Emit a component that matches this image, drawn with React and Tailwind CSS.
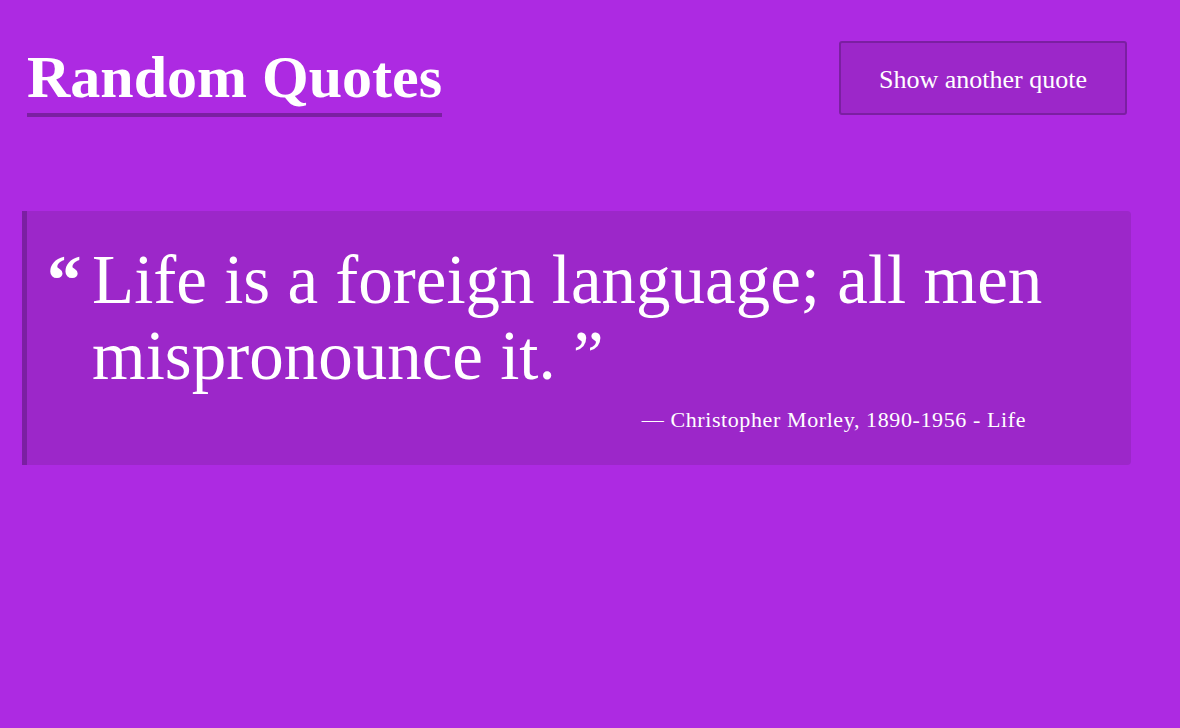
import React from "react";

function App() {
  return (
    <div
      className="min-h-screen bg-[#ad2ae2] text-white"
      style={{ fontFamily: '"Liberation Serif", "DejaVu Serif", serif' }}
    >
      {/* Header */}
      <header className="flex items-start justify-between pl-[27px] pr-[53px] pt-[41px]">
        <h1 className="mt-[8px] border-b-4 border-[#7b1fa2] pb-[8px] text-[60px] font-bold leading-[56px]">
          Random Quotes
        </h1>
        <button className="h-[74px] w-[288px] rounded-[3px] border-2 border-[#7b1fa2] bg-[#9c27c9] pt-[3px] text-[26px] text-white">
          Show another quote
        </button>
      </header>

      {/* Quote card */}
      <div className="ml-[22px] mt-[94px] w-[1109px] h-[254px] rounded-r-[4px] border-l-[5px] border-[#7b1fa2] bg-[#9c27c9] pl-[20px] pr-[20px] pt-[31px]">
        <div className="flex">
          <span className="w-[45px] shrink-0 text-[69px] font-bold leading-[76px]">“</span>
          <p className="text-[69px] leading-[76px]">
            Life is a foreign language; all men mispronounce it. ”
          </p>
        </div>
        <p className="mt-[9px] pr-[85px] text-right text-[22px] tracking-[0.6px]">
          — Christopher Morley, 1890-1956 - Life
        </p>
      </div>
    </div>
  );
}

export default App;
